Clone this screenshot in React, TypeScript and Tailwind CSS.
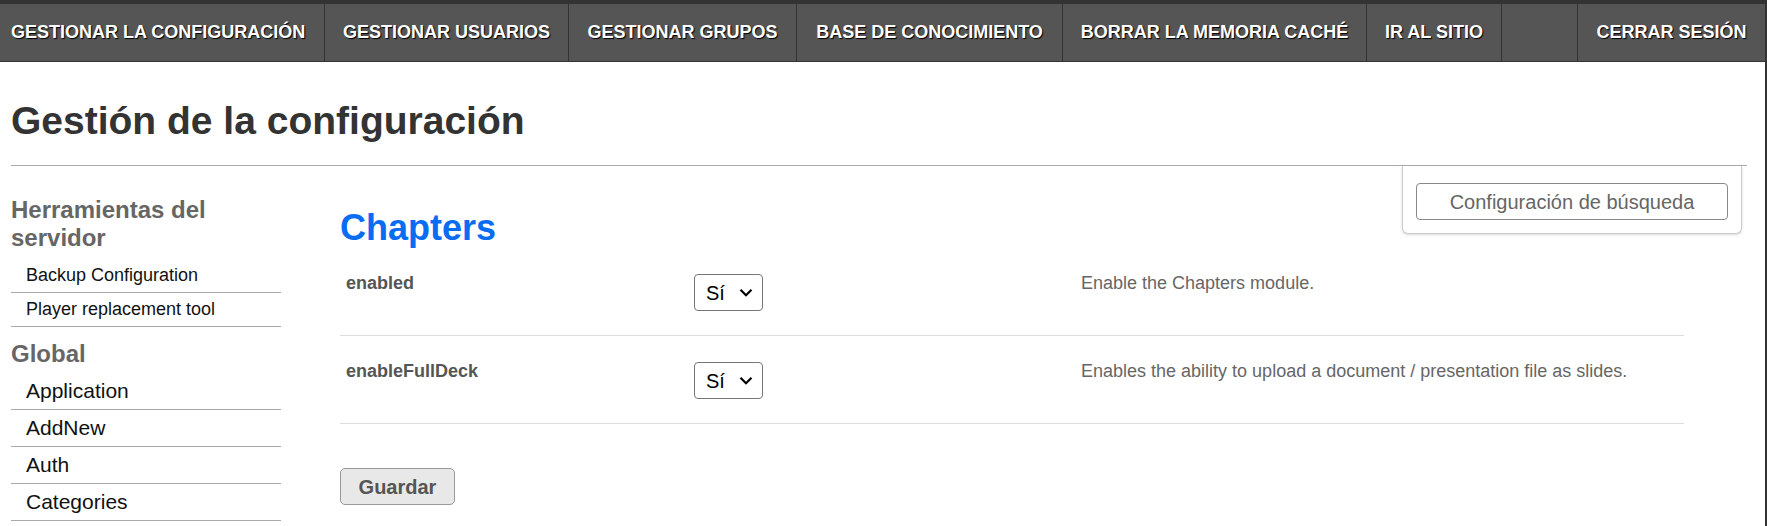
import React from "react";

const navItems: { label: string; w: string; first?: boolean }[] = [
  { label: "GESTIONAR LA CONFIGURACIÓN", w: "w-[325px]", first: true },
  { label: "GESTIONAR USUARIOS", w: "w-[244px]" },
  { label: "GESTIONAR GRUPOS", w: "w-[228px]" },
  { label: "BASE DE CONOCIMIENTO", w: "w-[266px]" },
  { label: "BORRAR LA MEMORIA CACHÉ", w: "w-[304px]" },
  { label: "IR AL SITIO", w: "w-[135px]" },
  { label: "", w: "w-[76px]" },
];

function Select() {
  return (
    <div className="relative mt-[2px] h-[37px] w-[69px]">
      <select
        defaultValue="si"
        className="h-[37px] w-[69px] appearance-none rounded-[4px] border border-[#767676] bg-white pl-[11px] text-[20px] text-black outline-none"
      >
        <option value="si">Sí</option>
        <option value="no">No</option>
      </select>
      <svg
        className="pointer-events-none absolute right-[10px] top-[14px]"
        width="14"
        height="10"
        viewBox="0 0 14 10"
        fill="none"
      >
        <path d="M1.5 1.8 L7 7.3 L12.5 1.8" stroke="#000" strokeWidth="2.2" />
      </svg>
    </div>
  );
}

function Row({ name, desc }: { name: string; desc: string }) {
  return (
    <div className="grid grid-cols-[348px_387px_1fr] border-b border-[#dddddd] pb-[24px] pt-[24px]">
      <div className="px-[6px] text-[18px] font-bold leading-[22px] text-[#555]">{name}</div>
      <div className="px-[6px]">
        <Select />
      </div>
      <div className="px-[6px] text-[18px] leading-[22px] text-[#666]">{desc}</div>
    </div>
  );
}

export default function App() {
  const font = "font-['Liberation_Sans',Arial,sans-serif]";
  return (
    <div className={`${font} min-h-[526px] w-full border-r-2 border-[#333] bg-white`}>
      <div className="h-[4px] bg-[#333]" />
      <nav className="flex h-[58px] border-b border-[#333] bg-[#555]">
        {navItems.map((it, i) => (
          <div
            key={i}
            className={`${it.w} flex shrink-0 items-center border-r border-[#333] ${
              it.first ? "pl-[11px]" : "justify-center"
            } whitespace-nowrap text-[18px] font-bold text-white [text-shadow:1px_1px_1px_#000]`}
          >
            {it.label}
          </div>
        ))}
        <div className="flex flex-1 items-center justify-center whitespace-nowrap text-[18px] font-bold text-white [text-shadow:1px_1px_1px_#000]">
          CERRAR SESIÓN
        </div>
      </nav>

      <h1 className="ml-[11px] mt-[36px] text-[39px] font-bold leading-[46px] text-[#333]">
        Gestión de la configuración
      </h1>
      <div className="ml-[11px] mr-[18px] mt-[21px] border-t border-[#aaa]" />

      <div className="relative">
        <div className="absolute right-[23px] top-0 w-[340px] rounded-b-[6px] border border-t-0 border-[#ccc] bg-white px-[13px] pb-[13px] pt-[17px] shadow-[0_1px_3px_rgba(0,0,0,0.15)]">
          <button className="h-[37px] w-full rounded-[4px] border border-[#888] bg-white text-[20px] text-[#666]">
            Configuración de búsqueda
          </button>
        </div>

        <div className="flex pl-[11px] pt-[30px]">
          <aside className="w-[270px] shrink-0">
            <h3 className="text-[24px] font-bold leading-[28px] text-[#666]">
              Herramientas del servidor
            </h3>
            <ul className="mt-[7px]">
              {["Backup Configuration", "Player replacement tool"].map((t) => (
                <li
                  key={t}
                  className="flex h-[34px] items-center border-b border-[#aaa] pl-[15px] text-[18px] text-[#111]"
                >
                  {t}
                </li>
              ))}
            </ul>
            <h3 className="mt-[13px] text-[24px] font-bold leading-[28px] text-[#666]">Global</h3>
            <ul className="mt-[5px]">
              {["Application", "AddNew", "Auth", "Categories"].map((t) => (
                <li
                  key={t}
                  className="flex h-[37px] items-center border-b border-[#aaa] pl-[15px] text-[21px] text-[#111]"
                >
                  {t}
                </li>
              ))}
            </ul>
          </aside>

          <main className="ml-[59px] w-[1344px] pt-[12px]">
            <h2 className="text-[36px] font-bold leading-[40px] text-[#0a6cf2]">Chapters</h2>
            <Row name="enabled" desc="Enable the Chapters module." />
            <Row
              name="enableFullDeck"
              desc="Enables the ability to upload a document / presentation file as slides."
            />
            <button className="mt-[44px] h-[37px] w-[115px] rounded-[5px] border border-[#999] bg-[#e8e8e8] text-[20px] font-bold text-[#555]">
              Guardar
            </button>
          </main>
        </div>
      </div>
    </div>
  );
}
